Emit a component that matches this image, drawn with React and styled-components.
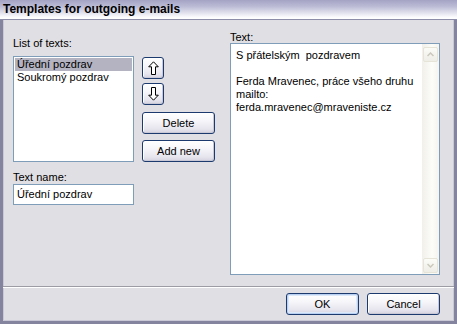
import React from 'react';
import styled, { createGlobalStyle } from 'styled-components';

const Global = createGlobalStyle`
  html, body { margin: 0; padding: 0; background: #e0dfe3; }
  body { font-family: "Liberation Sans", Arial, sans-serif; font-size: 11px; color: #000; }
  * { box-sizing: border-box; }
`;

const Window = styled.div`
  width: 457px;
  height: 324px;
  display: flex;
  flex-direction: column;
  background: #e0dfe3;
`;

const TitleBar = styled.div`
  height: 20px;
  flex: none;
  display: flex;
  align-items: center;
  padding: 0 0 1px 3px;
  background: linear-gradient(#a4a3c4 0%, #bcbcd6 35%, #e4e4ef 70%, #fbfbfd 90%, #ffffff 100%);
  border-bottom: 1px solid #8d8ca9;
  font-family: "Liberation Sans", Arial, sans-serif;
  font-weight: bold;
  font-size: 12px;
  color: #000;
`;

const Frame = styled.div`
  flex: 1;
  display: flex;
  flex-direction: column;
  border: 3px solid #85849f;
  border-top: none;
  box-shadow: inset 1px 0 0 #c8c8d6, inset -1px 0 0 #c8c8d6, inset 0 -1px 0 #c8c8d6;
`;

const Content = styled.div`
  flex: 1;
  display: flex;
  padding: 11px 14px 11px 10px;
  gap: 15px;
`;

const LeftPane = styled.div`
  width: 202px;
  margin-top: 6px;
  display: flex;
  flex-direction: column;
`;

const Label = styled.div`
  height: ${p => p.$h || 13}px;
  margin-top: ${p => p.$mt || 0}px;
  line-height: 13px;
  white-space: nowrap;
`;

const ListRow = styled.div`
  display: flex;
  gap: 8px;
  margin-top: 6px;
`;

const ListBox = styled.div`
  width: 121px;
  height: 106px;
  flex: none;
  background: #fff;
  border: 1px solid #7f9db9;
  padding: 1px;
`;

const ListItem = styled.div`
  height: 13px;
  line-height: 13px;
  padding-left: 2px;
  white-space: nowrap;
  background: ${p => (p.$selected ? '#b4b3c1' : 'transparent')};
`;

const ButtonCol = styled.div`
  display: flex;
  flex-direction: column;
  align-items: flex-start;
  padding-top: 1px;
`;

const Button = styled.button`
  width: ${p => p.$w || 73}px;
  height: 22px;
  margin-top: ${p => p.$mt || 0}px;
  padding: 0;
  display: flex;
  align-items: center;
  justify-content: center;
  font-family: "Liberation Sans", Arial, sans-serif;
  font-size: 11px;
  color: #000;
  border: 1px solid #1c3a6e;
  border-radius: 3px;
  background: linear-gradient(#ffffff 0%, #f6f5f9 40%, #e6e5ee 80%, #d4d3df 100%);
  box-shadow: ${p =>
    p.$default
      ? 'inset 0 0 0 1px #b9d0f2, inset 0 0 0 2px #dce8f8'
      : 'inset -1px -1px 0 #c9c8d6, inset 1px 1px 0 #ffffff'};
`;

const NameInput = styled.div`
  width: 121px;
  height: 21px;
  background: #fff;
  border: 1px solid #7f9db9;
  padding: 0 3px;
  line-height: 19px;
  white-space: nowrap;
`;

const RightPane = styled.div`
  width: 210px;
  display: flex;
  flex-direction: column;
`;

const TextBox = styled.div`
  height: 232px;
  display: flex;
  background: #fff;
  border: 1px solid #7f9db9;
`;

const TextBody = styled.div`
  flex: 1;
  padding: 5px 0 0 5px;
  line-height: 13px;
  white-space: pre-wrap;
`;

const ScrollBar = styled.div`
  width: 17px;
  flex: none;
  display: flex;
  flex-direction: column;
  justify-content: space-between;
  padding: 3px 1px 1px 1px;
  background: linear-gradient(90deg, #f1f0ea, #fcfcf9 60%, #f4f3ee);
`;

const ScrollButton = styled.div`
  width: 15px;
  height: 15px;
  display: flex;
  align-items: center;
  justify-content: center;
  border: 1px solid #e6e4d8;
  border-radius: 2px;
  background: linear-gradient(#fbfbf8, #eeede6);
`;

const Separator = styled.div`
  height: 2px;
  flex: none;
  border-top: 1px solid #9d9ca5;
  border-bottom: 1px solid #ffffff;
`;

const Footer = styled.div`
  display: flex;
  justify-content: flex-end;
  gap: 8px;
  padding: 5px 14px 6px 0;
`;

const ArrowIcon = ({ down }) => (
  <svg width="11" height="14" viewBox="0 0 11 14" style={{ transform: down ? 'rotate(180deg)' : 'none' }}>
    <path d="M5.5 0.8 L10.3 5.8 L7.5 5.8 L7.5 13.5 L3.5 13.5 L3.5 5.8 L0.7 5.8 Z" fill="#fff" stroke="#000" strokeWidth="1" />
  </svg>
);

const Chevron = ({ down }) => (
  <svg width="7" height="5" viewBox="0 0 7 5">
    <path d={down ? 'M0.5 1 L3.5 4 L6.5 1' : 'M0.5 4 L3.5 1 L6.5 4'} fill="none" stroke="#cbc9bd" strokeWidth="1.5" />
  </svg>
);

export default function App() {
  return (
    <>
      <Global />
      <Window>
        <TitleBar>Templates for outgoing e-mails</TitleBar>
        <Frame>
          <Content>
            <LeftPane>
              <Label>List of texts:</Label>
              <ListRow>
                <ListBox>
                  <ListItem $selected>Úřední pozdrav</ListItem>
                  <ListItem>Soukromý pozdrav</ListItem>
                </ListBox>
                <ButtonCol>
                  <Button $w={22}><ArrowIcon /></Button>
                  <Button $w={22} $mt={4}><ArrowIcon down /></Button>
                  <Button $mt={7}>Delete</Button>
                  <Button $mt={6}>Add new</Button>
                </ButtonCol>
              </ListRow>
              <Label $mt={9}>Text name:</Label>
              <NameInput>Úřední pozdrav</NameInput>
            </LeftPane>
            <RightPane>
              <Label $h={12}>Text:</Label>
              <TextBox>
                <TextBody>{'S přátelským  pozdravem\n\nFerda Mravenec, práce všeho druhu\nmailto:\nferda.mravenec@mraveniste.cz'}</TextBody>
                <ScrollBar>
                  <ScrollButton><Chevron /></ScrollButton>
                  <ScrollButton><Chevron down /></ScrollButton>
                </ScrollBar>
              </TextBox>
            </RightPane>
          </Content>
          <Separator />
          <Footer>
            <Button $default>OK</Button>
            <Button>Cancel</Button>
          </Footer>
        </Frame>
      </Window>
    </>
  );
}
